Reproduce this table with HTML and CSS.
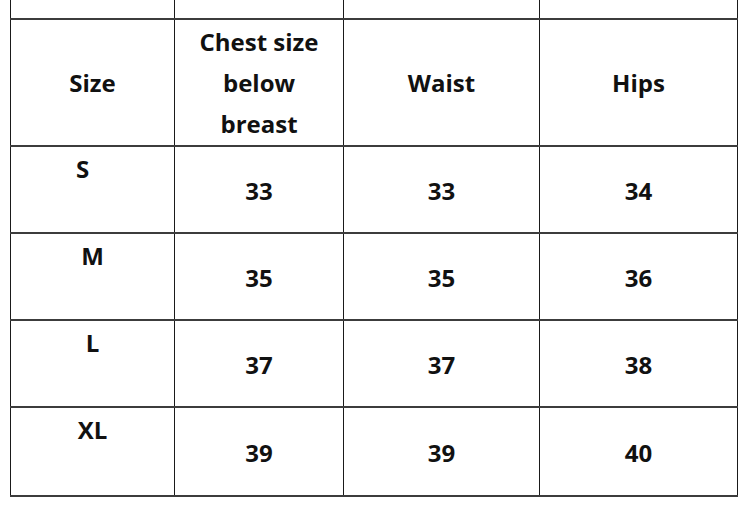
FILE: index.html
```html
<!DOCTYPE html>
<html>
<head>
<meta charset="utf-8">
<link rel="stylesheet" href="styles.css">
</head>
<body>
<table class="chart">
  <colgroup>
    <col class="c1"><col class="c2"><col class="c3"><col class="c4">
  </colgroup>
  <tr class="cut"><td></td><td></td><td></td><td></td></tr>
  <tr class="head">
    <th>Size</th>
    <th>Chest size<br>below<br>breast</th>
    <th>Waist</th>
    <th>Hips</th>
  </tr>
  <tr class="row"><td class="size size-s">S</td><td>33</td><td>33</td><td>34</td></tr>
  <tr class="row"><td class="size">M</td><td>35</td><td>35</td><td>36</td></tr>
  <tr class="row"><td class="size">L</td><td>37</td><td>37</td><td>38</td></tr>
  <tr class="row last"><td class="size">XL</td><td>39</td><td>39</td><td>40</td></tr>
</table>
</body>
</html>
```

FILE: styles.css
```css
html, body {
  margin: 0;
  padding: 0;
  background: #ffffff;
}

.chart {
  margin-left: 10px;
  margin-top: -1px;
  border-collapse: collapse;
  table-layout: fixed;
  width: 727px;
  font-family: "Open Sans", "Lato", sans-serif;
  font-weight: 700;
  font-size: 24px;
  color: #111;
}

.c1 { width: 164px; }
.c2 { width: 169px; }
.c3 { width: 196px; }
.c4 { width: 198px; }

.chart td, .chart th {
  border-left: 1px solid #1a1a1a;
  border-right: 1px solid #1a1a1a;
  border-top: 2px solid #3c3c3c;
  border-bottom: 2px solid #3c3c3c;
  text-align: center;
  vertical-align: middle;
  padding: 0;
}

.cut {
  height: 20px;
}

.cut td {
  border-top: none;
}

.head {
  height: 127px;
}

.head th {
  font-weight: 700;
  line-height: 41px;
}

.row {
  height: 87px;
}

.row td {
  line-height: 30px;
  padding-top: 3px;
}

.row.last {
  height: 89px;
}

.row td.size {
  vertical-align: top;
  padding-top: 7px;
}

.row td.size-s {
  padding-right: 20px;
}
```
